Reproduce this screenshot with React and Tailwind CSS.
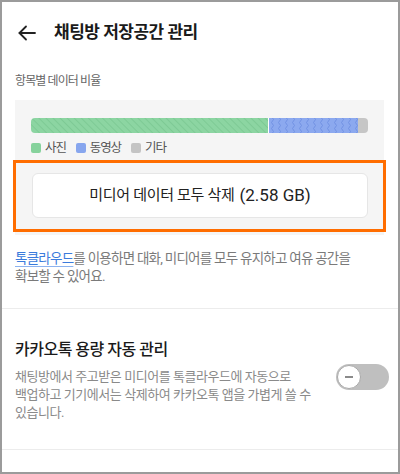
import React from "react";

const font = { fontFamily: "Roboto, 'Noto Sans CJK KR', sans-serif" };

const StorageBar = () => {
  // 사진 / 동영상 / 기타 ratio bar
  return (
    <svg width="337" height="15" viewBox="0 0 337 15" className="block">
      <defs>
        <clipPath id="barClip">
          <rect x="0" y="0" width="337" height="15" rx="4" />
        </clipPath>
        <pattern id="photo" width="5" height="5" patternUnits="userSpaceOnUse" patternTransform="rotate(-45)">
          <rect width="5" height="5" fill="#8cd5a2" />
          <line x1="0" y1="0" x2="0" y2="5" stroke="#6cbd86" strokeWidth="0.9" />
        </pattern>
        <pattern id="video" width="7" height="6" patternUnits="userSpaceOnUse">
          <rect width="7" height="6" fill="#8ca9ef" />
          <path d="M3.5 0 q2 1.5 0 3 q-2 1.5 0 3" fill="none" stroke="#6d8de2" strokeWidth="0.9" />
        </pattern>
      </defs>
      <g clipPath="url(#barClip)">
        <rect x="0" y="0" width="237" height="15" fill="url(#photo)" />
        <rect x="237" y="0" width="1" height="15" fill="#ffffff" />
        <rect x="238" y="0" width="89" height="15" fill="url(#video)" />
        <rect x="327" y="0" width="10" height="15" fill="#c6c6c6" />
      </g>
    </svg>
  );
};

const Legend = ({ color, label }) => (
  <div className="flex items-center">
    <span className={`w-[10px] h-[10px] rounded-[2px] ${color}`} />
    <span className="ml-[4px] text-[12.5px] tracking-[-1.1px] text-[#555] leading-[13px]">{label}</span>
  </div>
);

export default function App() {
  return (
    <div style={font} className="w-[400px] h-[474px] bg-white border-2 border-[#9b9b9b] overflow-hidden">
      {/* header */}
      <div className="h-[62px] flex items-center pl-[16px]">
        <svg width="18" height="16" viewBox="0 0 18 16" fill="none" stroke="#222" strokeWidth="1.8" strokeLinecap="round" strokeLinejoin="round">
          <path d="M17 8H1.5" />
          <path d="M8 1.5L1.5 8L8 14.5" />
        </svg>
        <h1 className="ml-[18px] text-[17px] font-bold tracking-[-0.5px] text-[#1a1a1a]">채팅방 저장공간 관리</h1>
      </div>

      <p className="mt-[9px] pl-[13px] h-[16px] leading-[16px] text-[12px] tracking-[-0.9px] text-[#666]">항목별 데이터 비율</p>

      {/* ratio panel */}
      <div className="mt-[11px] ml-[13px] w-[369px] bg-[#f5f5f5] pt-[18px] pb-[3px]">
        <div className="pl-[16px]">
          <StorageBar />
          <div className="mt-[8px] h-[13px] flex items-center gap-[10px]">
            <Legend color="bg-[#86d29c]" label="사진" />
            <Legend color="bg-[#87a6ee]" label="동영상" />
            <Legend color="bg-[#c4c4c4]" label="기타" />
          </div>
        </div>
        <div className="mt-[6px] -mx-[2px] border-[3px] border-[#ff6d00] pt-[10px] pb-[11px] pl-[16px] pr-[15px]">
          <button className="w-full h-[45px] bg-white border border-[#e6e6e6] rounded-[6px] flex items-center justify-center text-[#222]">
            <span className="text-[15px] tracking-[-0.3px]">미디어 데이터 모두 삭제</span>
            <span className="ml-[5px] text-[17px]">(2.58 GB)</span>
          </button>
        </div>
      </div>

      <p className="mt-[14px] pl-[13px] text-[13.5px] leading-[18px] tracking-[-0.75px] text-[#7a7a7a] whitespace-nowrap">
        <span className="text-[#3b7bdc] underline decoration-[#8db3ef] underline-offset-[3px]">톡클라우드</span>를 이용하면 대화, 미디어를 모두 유지하고 여유 공간을
        <br />
        확보할 수 있어요.
      </p>

      <div className="mt-[23px] h-px bg-[#ececec]" />

      {/* auto management */}
      <div className="flex justify-between pl-[13px] pr-[9px]">
        <div className="pt-[30px]">
          <h2 className="text-[16px] leading-[22px] font-medium tracking-[-0.5px] text-[#1a1a1a]">카카오톡 용량 자동 관리</h2>
          <p className="mt-[7px] text-[13px] leading-[18px] tracking-[-0.45px] text-[#8a8a8a] whitespace-nowrap">
            채팅방에서 주고받은 미디어를 톡클라우드에 자동으로
            <br />
            백업하고 기기에서는 삭제하여 카카오톡 앱을 가볍게 쓸 수
            <br />
            있습니다.
          </p>
        </div>
        <div className="mt-[55px] relative w-[53px] h-[26px] rounded-full bg-[#bfbfbf] shrink-0">
          <div className="absolute left-[1px] top-[1px] w-[24px] h-[24px] rounded-full bg-white border-[1.5px] border-[#a9a9a9] flex items-center justify-center">
            <span className="w-[8px] h-[1.5px] bg-[#8a8a8a]" />
          </div>
        </div>
      </div>

      <div className="mt-[27px] h-px bg-[#ececec]" />
    </div>
  );
}
